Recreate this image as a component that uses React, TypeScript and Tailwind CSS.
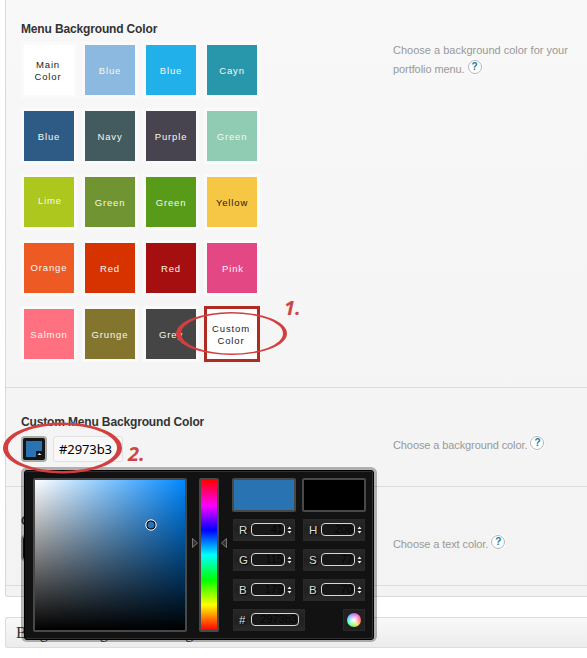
import React from "react";

type Tile = { name: string; bg: string; text?: string; pad?: string; custom?: boolean };

const tiles: Tile[] = [
  { name: "Main Color", bg: "bg-white", text: "text-[#222]", pad: "pt-[2px] pr-[2px]" },
  { name: "Blue", bg: "bg-[#8bb9df]", pad: "pt-[2px]" },
  { name: "Blue", bg: "bg-[#21b0e9]", pad: "pt-[2px]" },
  { name: "Cayn", bg: "bg-[#2997ab]", pad: "pt-[2px]" },
  { name: "Blue", bg: "bg-[#2d5b86]", pad: "pt-[2px]" },
  { name: "Navy", bg: "bg-[#435a5e]", pad: "pt-[2px]" },
  { name: "Purple", bg: "bg-[#47434f]", pad: "pt-[2px]" },
  { name: "Green", bg: "bg-[#8fccb3]", pad: "pt-[2px]" },
  { name: "Lime", bg: "bg-[#aec71e]", pad: "pb-[2px] pl-[2px]" },
  { name: "Green", bg: "bg-[#709431]", pad: "pt-[2px]" },
  { name: "Green", bg: "bg-[#579b18]", pad: "pt-[2px]" },
  { name: "Yellow", bg: "bg-[#f6c744]", text: "text-[#222]", pad: "pt-[2px]" },
  { name: "Orange", bg: "bg-[#ed5a24]" },
  { name: "Red", bg: "bg-[#d63300]", pad: "pt-[2px]" },
  { name: "Red", bg: "bg-[#a60f10]", pad: "pt-[2px]" },
  { name: "Pink", bg: "bg-[#e34885]", pad: "pt-[2px] pl-[2px]" },
  { name: "Salmon", bg: "bg-[#ff7180]", pad: "pt-[2px]" },
  { name: "Grunge", bg: "bg-[#84752e]", pad: "pt-[2px]" },
  { name: "Grey", bg: "bg-[#454545]", pad: "pt-[2px]" },
  { name: "Custom Color", bg: "bg-white", text: "text-[#222]", pad: "pt-[2px] pr-[2px]", custom: true },
];

function Help() {
  return (
    <span className="relative -top-[3px] inline-flex h-[14px] w-[14px] items-center justify-center rounded-full border border-[#b5b5b5] bg-white align-middle font-['Liberation_Sans',sans-serif] text-[10px] leading-none font-bold tracking-normal text-[#197a9f] shadow-[0_0_0_1px_#fcfcfc]">
      ?
    </span>
  );
}

function Heading({ children }: { children: React.ReactNode }) {
  return (
    <h4 className="h-[18px] text-[12px] leading-[18px] font-bold tracking-[-0.15px] whitespace-nowrap text-[#333]">
      {children}
    </h4>
  );
}

function Spinner() {
  return (
    <svg width="5" height="8" viewBox="0 0 5 8" className="ml-[2px] shrink-0">
      <path d="M0.5 3 2.5 0.4 4.5 3zM0.5 5 2.5 7.6 4.5 5z" fill="#eee" />
    </svg>
  );
}

function Field({ label, value, wide }: { label: string; value: string; wide?: boolean }) {
  return (
    <div
      className={`flex h-[22px] items-center border border-[#292929] bg-linear-to-b from-[#272727] via-[#202020] to-[#292929] pl-[5px] ${wide ? "w-[72px]" : "w-[62px]"}`}
    >
      <span className="w-[12px] shrink-0 text-[11.5px] leading-[20px] text-[#ddd] [text-shadow:1px_1px_1px_#000]">{label}</span>
      <span
        className={`mb-[2px] box-border flex h-[13px] shrink-0 items-center justify-end rounded-[4px] border-[1.5px] border-[#d9d9d9] bg-[#171717] pr-px text-[11px] leading-none text-[#050505] ${wide ? "w-[48px]" : "w-[34px]"}`}
      >
        {value}
      </span>
      {!wide && <Spinner />}
    </div>
  );
}

function Picker() {
  return (
    <div className="absolute top-[467px] left-[21px] h-[175px] w-[356px] rounded-[6px] bg-black/28 p-[3px]">
      <div className="relative flex h-[170px] w-[350px] rounded-[3px] border border-black bg-[#121212] pt-[7px] pl-[8px] shadow-[inset_-1px_-1px_0_#333,inset_0_1px_0_#303030]">
        <div className="h-[154px] w-[154px] shrink-0 rounded-[2px] border-2 border-[#484848] bg-[linear-gradient(to_top,#000,transparent),linear-gradient(to_right,#fff,#0088ff)] bg-origin-padding">
          <svg width="12" height="12" viewBox="0 0 12 12" className="mt-[39px] ml-[110px]">
            <circle cx="6" cy="6" r="4.2" fill="#2973b3" stroke="#000" strokeWidth="1.2" />
            <circle cx="6" cy="6" r="5.2" fill="none" stroke="#fff" strokeWidth="1" />
          </svg>
        </div>
        <svg width="6" height="10" viewBox="0 0 6 10" className="mt-[60px] ml-[5px] shrink-0">
          <path d="M.5.5 5.5 5 .5 9.5z" fill="#333" stroke="#777" />
        </svg>
        <div className="ml-px h-[154px] w-[20px] shrink-0 rounded-[2px] border-2 border-[#484848] bg-[linear-gradient(to_bottom,#f00,#f0f_17%,#00f_33.3%,#0ff_50%,#0f0_66.7%,#ff0_83.3%,#f00)] bg-origin-padding" />
        <svg width="6" height="10" viewBox="0 0 6 10" className="mt-[60px] ml-[2px] shrink-0">
          <path d="M5.5.5.5 5l5 4.5z" fill="#333" stroke="#777" />
        </svg>
        <div className="ml-[5px] w-[134px]">
          <div className="flex gap-[6px]">
            <div className="h-[34px] w-[64px] rounded-[2px] border-2 border-[#484848] bg-[#2973b3]" />
            <div className="h-[34px] w-[64px] rounded-[2px] border-2 border-[#484848] bg-black" />
          </div>
          <div className="mt-[7px] ml-px grid grid-cols-[62px_62px] gap-x-[8px] gap-y-[8px]">
            <Field label="R" value="41" />
            <Field label="H" value="208" />
            <Field label="G" value="115" />
            <Field label="S" value="77" />
            <Field label="B" value="179" />
            <Field label="B" value="70" />
          </div>
          <div className="mt-[8px] ml-px flex w-[132px] justify-between">
            <Field label="#" value="2973b3" wide />
            <div className="flex h-[22px] w-[22px] items-center justify-center border border-[#292929] bg-[#202020]">
              <div className="h-[14px] w-[14px] rounded-full bg-[radial-gradient(circle,#fff_5%,transparent_75%),conic-gradient(from_90deg,#f55,#fc4,#6f4,#4fc,#4bf,#a5f,#f4c,#f55)]" />
            </div>
          </div>
        </div>
      </div>
    </div>
  );
}

export default function App() {
  return (
    <div className="relative h-[658px] w-[587px] overflow-hidden bg-white pl-[5px] font-['Liberation_Sans',Arial,sans-serif]">
      <div className="h-[597px] w-[582px] rounded-bl-[3px] border-b border-l border-[#d9d9d9] bg-linear-to-b from-[#f8f8f8] to-[#f3f3f3]">
        <section className="flex h-[388px] border-b border-[#dcdcdc] pt-[20px] pl-[15px]">
          <div className="w-[372px]">
            <Heading>Menu Background Color</Heading>
            <div className="mt-[4px] grid grid-cols-[repeat(4,56px)] gap-x-[5px] gap-y-[10px]">
              {tiles.map((t, i) => (
                <div
                  key={i}
                  className={`flex h-[56px] w-[56px] items-center justify-center border-3 bg-clip-padding text-center text-[9.5px] leading-[12px] tracking-[0.85px] ${t.custom ? "border-[#ae2c23]" : "border-[#fafafa]"} ${t.bg} ${t.text ?? "text-[#f8f8f0]"} ${t.pad ?? ""}`}
                >
                  {t.name}
                </div>
              ))}
            </div>
          </div>
          <p className="mt-[21px] w-[190px] text-[11px] leading-[19px] text-[#999]">
            Choose a background color for your
            <br />
            <span className="tracking-[-0.08px]">portfolio menu.</span> <Help />
          </p>
        </section>
        <section className="flex h-[99px] border-b border-[#dcdcdc] pt-[25px] pl-[15px]">
          <div className="w-[372px]">
            <Heading>Custom Menu Background Color</Heading>
            <div className="mt-[5px] flex">
              <div className="h-[26px] w-[26px] rounded-[4px] bg-[#aaa] p-[2px]">
                <div className="h-[22px] w-[22px] rounded-[2px] bg-[#151515] p-[3px]">
                  <svg width="16" height="16" viewBox="0 0 16 16">
                    <path d="M0 0h16v16H0z" fill="#2973b3" />
                    <path d="M10 10h6v6h-6z" fill="#111" />
                    <path d="m11.5 14 2-2 2 2z" fill="#eee" />
                  </svg>
                </div>
              </div>
              <div className="ml-[6px] h-[26px] w-[70px] rounded-[3px] border border-[#e1e1e1] bg-[#f8f8f8] pl-[5px] font-['Noto_Sans',sans-serif] text-[13px] leading-[24px] tracking-[-0.1px] text-black">
                #2973b3
              </div>
            </div>
          </div>
          <p className="mt-[23px] text-[11px] leading-[19px] text-[#999]">
            <span className="tracking-[-0.1px]">Choose a background color.</span> <Help />
          </p>
        </section>
        <section className="flex h-[99px] border-b border-[#dcdcdc] pt-[25px] pl-[15px]">
          <div className="w-[372px]">
            <Heading>Custom Menu Text Color</Heading>
            <div className="mt-[5px] h-[26px] w-[26px] rounded-[4px] border-2 border-[#aaa] bg-[#151515]" />
          </div>
          <p className="mt-[23px] text-[11px] leading-[19px] text-[#999]">
            <span className="tracking-[-0.1px]">Choose a text color.</span> <Help />
          </p>
        </section>
      </div>
      <div className="mt-[20px] h-[31px] w-[582px] rounded-l-[3px] border border-r-0 border-[#dcdcdc] bg-linear-to-b from-[#f9f9f9] to-[#ececec] pl-[10px] font-['Liberation_Serif',serif] text-[16.5px] leading-[30px] whitespace-nowrap text-[#333]">
        Blog Heading Font Settings
      </div>
      <Picker />
      <svg width="587" height="658" className="pointer-events-none absolute top-0 left-0" fill="#d33f3e" fillRule="evenodd">
        <path d="M176 333.5a55.5 21.5 0 1 0 111 0a55.5 21.5 0 1 0-111 0zM181 333.5a51 20 0 1 1 102 0a51 20 0 1 1-102 0z" />
        <path d="M3 448a59.5 25.5 0 1 0 119 0a59.5 25.5 0 1 0-119 0zM8 448a54.5 23 0 1 1 109 0a54.5 23 0 1 1-109 0z" />
      </svg>
      <span className="absolute top-[295px] left-[284px] font-['Open_Sans',sans-serif] text-[20px] leading-[26px] font-bold text-[#cf4544] italic">1.</span>
      <span className="absolute top-[441px] left-[128px] font-['Open_Sans',sans-serif] text-[20px] leading-[26px] font-bold text-[#cf4544] italic">2.</span>
    </div>
  );
}
